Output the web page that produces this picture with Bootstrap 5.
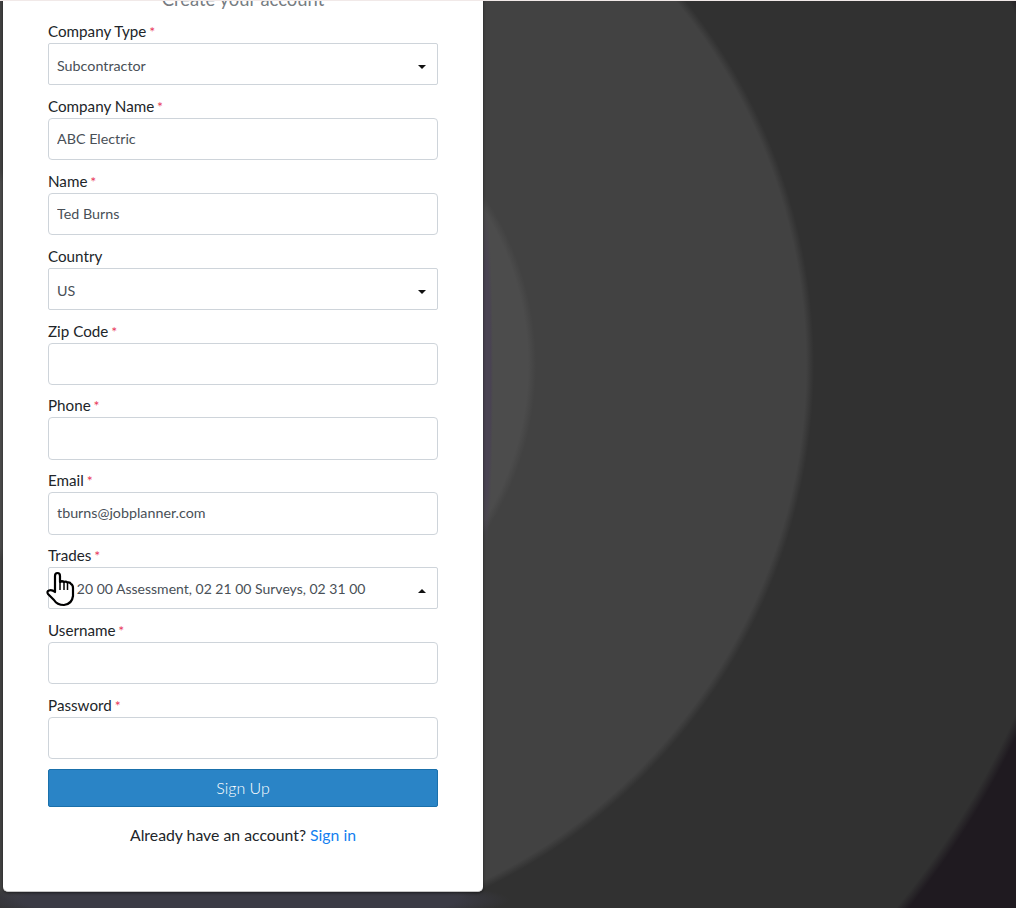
<!DOCTYPE html>
<html lang="en">
<head>
<meta charset="utf-8">
<title>Sign Up</title>
<link href="https://cdn.jsdelivr.net/npm/bootstrap@5.3.0/dist/css/bootstrap.min.css" rel="stylesheet">
<style>
html, body { height: 100%; }
body {
  font-family: "Lato", "Liberation Sans", sans-serif;
  overflow: hidden;
  background:
    radial-gradient(ellipse 7px 170px at 486px 378px, #494352 65%, rgba(73,67,82,0) 100%),
    radial-gradient(ellipse 270px 24px at 240px 900px, #3b3b45 80%, rgba(59,59,69,0) 100%),
    radial-gradient(circle at 233px 365px, #4c4c4c 0 295px, #424242 303px 573px, #313131 581px 857px, #1f1a20 867px);
}
.page-frame { height: 908px; overflow: hidden; border-top: 1px solid #f1e9e8; }
.signup-panel {
  width: 480px; margin-left: 3px; margin-top: -13px; height: 904px;
  border: 0; border-bottom: 1px solid #c4c4c4; border-radius: 5px; box-shadow: 0 1px 3px rgba(0,0,0,.55);
}
.signup-panel .card-body { padding: 0 45px; }
.panel-title { font-size: 18.4px; font-weight: 400; line-height: 22px; color: #777c82; margin: 0 0 9px; text-align: center; }
.field-row { position: relative; margin-bottom: 8.59px; }
.field-row .form-label { display: block; margin: 0; font-size: 15.2px; line-height: 24px; color: #212529; height: 24px; }
.req { color: #e8395a; font-size: 14px; margin-left: -1px; }
.form-control, .form-select {
  height: 42.3px; padding: 0 8px 1px; font-size: 14.3px; line-height: 40px; color: #495057;
  border: 1px solid #ced4da; border-radius: 4px; background-color: #fff;
}
.form-select {
  border-radius: 2px; padding-top: 2px; padding-bottom: 0;
  background-image: url("data:image/svg+xml,%3Csvg xmlns='http://www.w3.org/2000/svg' width='8' height='4'%3E%3Cpath d='M0 0h8L4 4z' fill='%23111'/%3E%3C/svg%3E");
  background-position: right 11px top 21px; background-size: 8px 4px; padding-right: 30px;
}
.select-open {
  font-size: 14px; padding-top: 1px;
  background-image: url("data:image/svg+xml,%3Csvg xmlns='http://www.w3.org/2000/svg' width='8' height='4'%3E%3Cpath d='M0 4h8L4 0z' fill='%23111'/%3E%3C/svg%3E");
}
.hand-cursor { position: absolute; left: -2px; top: 28px; width: 30px; height: 36px; pointer-events: none; }
.signup-btn {
  height: 38px; margin-top: 1.2px; font-size: 16px; font-weight: 300; padding: 0; color: #fff;
  background-color: #2a84c6; border: 1px solid #1a70ab; border-radius: 2px;
}
.signin-line { font-size: 15.8px; line-height: 24px; color: #212529; margin: 16px 0 0; text-align: center; }
.signin-line a { color: #147ff0; text-decoration: none; }
</style>
</head>
<body>
<div class="page-frame">
  <div class="card signup-panel">
    <div class="card-body">
      <h2 class="panel-title">Create your account</h2>
      <form>
        <div class="field-row">
          <label class="form-label" for="ctype">Company Type <span class="req">*</span></label>
          <select class="form-select" id="ctype"><option>Subcontractor</option></select>
        </div>
        <div class="field-row">
          <label class="form-label" for="cname">Company Name <span class="req">*</span></label>
          <input class="form-control" id="cname" value="ABC Electric">
        </div>
        <div class="field-row">
          <label class="form-label" for="pname">Name <span class="req">*</span></label>
          <input class="form-control" id="pname" value="Ted Burns">
        </div>
        <div class="field-row">
          <label class="form-label" for="country">Country</label>
          <select class="form-select" id="country"><option>US</option></select>
        </div>
        <div class="field-row">
          <label class="form-label" for="zip">Zip Code <span class="req">*</span></label>
          <input class="form-control" id="zip">
        </div>
        <div class="field-row">
          <label class="form-label" for="phone">Phone <span class="req">*</span></label>
          <input class="form-control" id="phone">
        </div>
        <div class="field-row">
          <label class="form-label" for="email">Email <span class="req">*</span></label>
          <input class="form-control" id="email" value="tburns@jobplanner.com">
        </div>
        <div class="field-row">
          <label class="form-label" for="trades">Trades <span class="req">*</span></label>
          <select class="form-select select-open" id="trades"><option>02 20 00 Assessment, 02 21 00 Surveys, 02 31 00</option></select>
          <svg class="hand-cursor" viewBox="46 571 30 36" aria-hidden="true">
            <path d="M55 589V576Q55 573 57.5 573Q60 573 60 576V582Q62 580.5 64 582Q66 581 67.5 582.5Q70 582 71 584Q73 585 73 588V596Q72 604 64 605Q57 605 54 600L48 594Q46.5 591.5 49 590.5Q52 589.5 55 592Z" fill="#fff" stroke="#000" stroke-width="2.2" stroke-linejoin="round"/>
            <path d="M60 582V590M64 582V590M67.5 583V590" fill="none" stroke="#000" stroke-width="1.5"/>
          </svg>
        </div>
        <div class="field-row">
          <label class="form-label" for="uname">Username <span class="req">*</span></label>
          <input class="form-control" id="uname">
        </div>
        <div class="field-row">
          <label class="form-label" for="pwd">Password <span class="req">*</span></label>
          <input class="form-control" id="pwd" type="password">
        </div>
        <button type="button" class="btn btn-primary w-100 signup-btn">Sign Up</button>
      </form>
      <p class="signin-line">Already have an account? <a href="#">Sign in</a></p>
    </div>
  </div>
</div>
<script src="https://cdn.jsdelivr.net/npm/bootstrap@5.3.0/dist/js/bootstrap.bundle.min.js"></script>
</body>
</html>
